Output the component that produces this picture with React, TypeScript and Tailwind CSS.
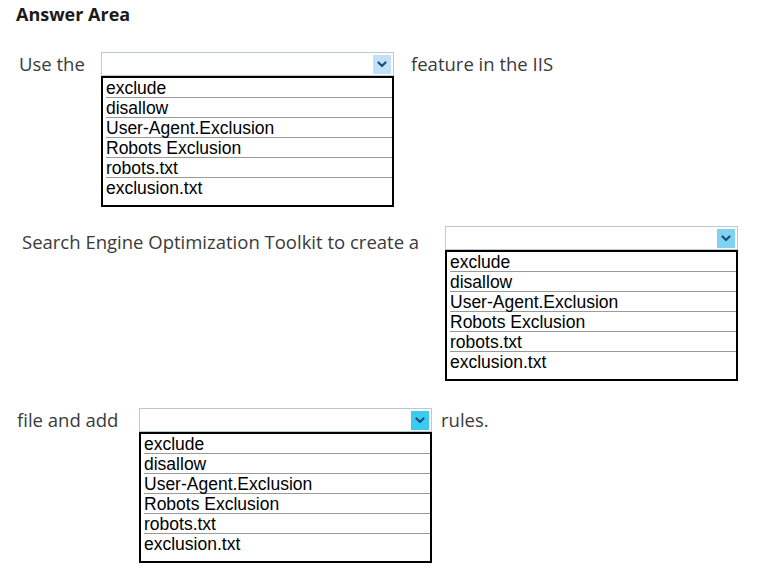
const OPTIONS = [
  "exclude",
  "disallow",
  "User-Agent.Exclusion",
  "Robots Exclusion",
  "robots.txt",
  "exclusion.txt",
];

function Chevron() {
  return (
    <svg width="10" height="7" viewBox="0 0 10 7" fill="none">
      <path d="M1.5 1.5 L5 5 L8.5 1.5" stroke="#1f4f7a" strokeWidth="2.2" strokeLinecap="round" strokeLinejoin="round" />
    </svg>
  );
}

function DropList({ btn }: { btn: string }) {
  return (
    <div className="flex w-[293px] flex-col">
      {/* closed select */}
      <div className="flex h-[24px] items-center justify-end border border-[#b6cad8] bg-white pr-[2px]">
        <div className={`flex h-[19px] w-[18px] items-center justify-center ${btn}`}>
          <Chevron />
        </div>
      </div>
      {/* open option list */}
      <div className="flex flex-col border-2 border-black bg-white pl-[3px] font-['Liberation_Sans',Arial,sans-serif] text-[17.5px] leading-[20px] text-black">
        {OPTIONS.map((o, i) => (
          <div
            key={o}
            className={i < OPTIONS.length - 1 ? "h-[20px] border-b border-[#9a9a9a]" : "h-[27px]"}
          >
            {o}
          </div>
        ))}
      </div>
    </div>
  );
}

export default function App() {
  return (
    <div className="h-[581px] w-[775px] bg-white font-['Open_Sans',sans-serif] text-[#3a3a3a]">
      <h1 className="pl-[16px] pt-[2px] text-[18px] font-bold leading-[24px] text-[#1a1a1a]">Answer Area</h1>

      {/* row 1 */}
      <div className="mt-[26px] flex items-start pl-[19px]">
        <span className="w-[82px] text-[18.5px] leading-[24px]">Use the</span>
        <DropList btn="bg-[#c2e0f6]" />
        <span className="ml-[17px] text-[18.5px] leading-[24px]">feature in the IIS</span>
      </div>

      {/* row 2 */}
      <div className="mt-[19px] flex items-start pl-[22px]">
        <span className="w-[423px] text-[18.5px] leading-[31px]">
          Search Engine Optimization Toolkit to create a
        </span>
        <DropList btn="bg-[#7fd2f0]" />
      </div>

      {/* row 3 */}
      <div className="mt-[27px] flex items-start pl-[17px]">
        <span className="w-[122px] text-[18.5px] leading-[24px]">file and add</span>
        <DropList btn="bg-[#3ccbf0]" />
        <span className="ml-[9px] text-[18.5px] leading-[24px]">rules.</span>
      </div>
    </div>
  );
}
